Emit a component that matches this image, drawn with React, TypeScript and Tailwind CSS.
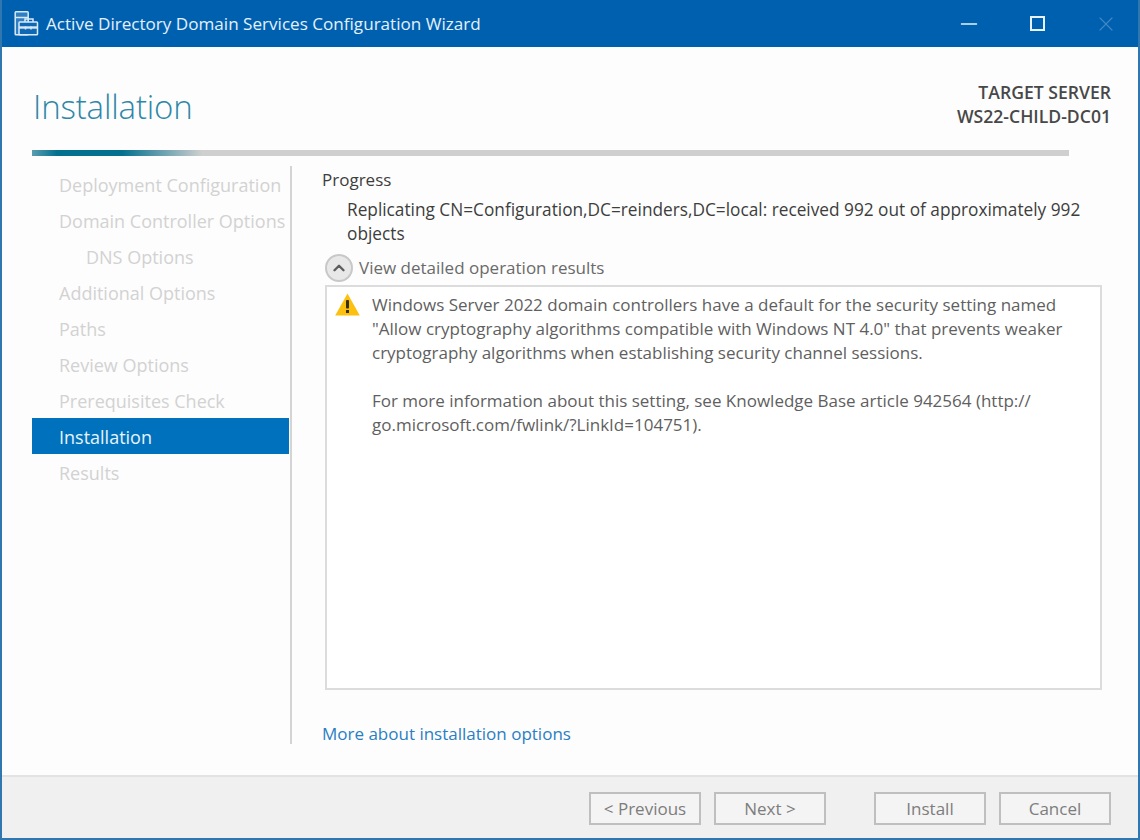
import React from 'react';
import { Minus, X, ChevronUp } from 'lucide-react';

const steps = [
  { label: 'Deployment Configuration' },
  { label: 'Domain Controller Options' },
  { label: 'DNS Options', indent: true },
  { label: 'Additional Options' },
  { label: 'Paths' },
  { label: 'Review Options' },
  { label: 'Prerequisites Check' },
  { label: 'Installation', active: true },
  { label: 'Results' },
];

function AppIcon() {
  return (
    <svg width="25" height="25" viewBox="0 0 25 25" fill="none" stroke="#d9e9f6" strokeWidth="1.5">
      <rect x="1.2" y="0.8" width="13" height="23" rx="0.8" fill="#2f7fc2" />
      <path d="M1.2 6.5h13" />
      <path d="M11 11V8h8v3" />
      <rect x="5" y="11" width="18.5" height="12.8" rx="0.8" fill="#0e68b4" />
      <path d="M5 16.5h18.5" strokeWidth="2.4" />
      <path d="M11.5 15.5v3M17 15.5v3" />
    </svg>
  );
}

function WarningIcon() {
  return (
    <svg width="25" height="23" viewBox="0 0 25 23">
      <path d="M12.5 0.5 24.8 22.5H0.2Z" fill="#fcc10f" />
      <rect x="11" y="7" width="3" height="8.5" rx="0.8" fill="#38300f" />
      <rect x="11" y="17" width="3" height="3" fill="#38300f" />
    </svg>
  );
}

function WizardButton({ label, className = '' }: { label: string; className?: string }) {
  return (
    <div className={`flex h-[33px] w-[112px] items-center justify-center border-2 border-[#bfbfbf] bg-[#f4f4f4] text-[#7d7d7d] ${className}`}>
      {label}
    </div>
  );
}

export default function App() {
  return (
    <div className="flex h-[840px] w-[1140px] flex-col overflow-hidden border-x-2 border-b-2 border-[#2f77ae] bg-[#fdfdfd] font-['Open_Sans','Noto_Sans',sans-serif] text-[17px] leading-[24px]">
      <div className="flex h-[47px] shrink-0 items-center bg-[#0060b0] pl-[12px] text-[#e4f0fa]">
        <AppIcon />
        <span className="ml-[7px] text-[17.1px]">Active Directory Domain Services Configuration Wizard</span>
        <div className="ml-auto flex items-center text-[#e8f2fa]">
          <Minus size={26} strokeWidth={1.2} className="mr-[48px]" />
          <div className="mr-[49px] h-[15px] w-[15px] border-2 border-[#e8f2fa]"></div>
          <X size={24} strokeWidth={1.2} className="mr-[20px] text-[#3f86c2]" />
        </div>
      </div>

      <div className="flex h-[103px] shrink-0 justify-between pl-[31px] pr-[27px]">
        <h1 className="mt-[37px] text-[33px] font-light leading-[46px] tracking-[-0.15px] text-[#2d87a8]">Installation</h1>
        <div className="mt-[33px] text-right text-[17.6px] font-semibold leading-[24px] text-[#484848]">
          <div>TARGET SERVER</div>
          <div>WS22-CHILD-DC01</div>
        </div>
      </div>

      <div className="ml-[30px] h-[6px] w-[1037px] shrink-0 bg-[linear-gradient(to_right,#5a9db0_0,#03708f_25px,#03708f_90px,#cfcfcf_170px)]"></div>

      <div className="mt-[10px] flex min-h-0 flex-1 pl-[30px]">
        <nav className="w-[257px] shrink-0">
          <ul className="flex flex-col text-[18px]">
            {steps.map((s) => (
              <li
                key={s.label}
                className={
                  s.active
                    ? 'flex h-[36px] items-center bg-[#0072bd] pl-[27px] pt-[2px] text-[#e8f3fb]'
                    : `flex h-[36px] items-center whitespace-nowrap pt-[2px] text-[#d2d2d2] ${s.indent ? 'pl-[54px]' : 'pl-[27px]'}`
                }
              >
                {s.label}
              </li>
            ))}
          </ul>
        </nav>

        <div className="ml-[1px] h-[578px] w-[2px] shrink-0 bg-[#d4d4d4]"></div>

        <main className="flex w-[810px] flex-col pl-[30px]">
          <div className="mt-[2px] text-[#3e3e3e]">Progress</div>
          <p className="mt-[6px] w-[775px] pl-[25px] text-[17.25px] text-[#3e3e3e]">
            Replicating CN=Configuration,DC=reinders,DC=local: received 992 out of approximately 992 objects
          </p>
          <div className="mt-[7px] flex h-[30px] items-center pl-[3px] text-[#6a6a6a]">
            <div className="flex h-[28px] w-[28px] items-center justify-center rounded-full border-2 border-[#c8c8c8] bg-[#e8e8e8]">
              <ChevronUp size={18} strokeWidth={3.2} className="text-[#5e5e5e]" />
            </div>
            <span className="ml-[6px]">View detailed operation results</span>
          </div>
          <div className="ml-[3px] mt-[2px] flex h-[405px] w-[777px] border-2 border-[#dcdcdc] bg-white pl-[8px] pt-[6px] text-[#5f5f5f]">
            <div className="shrink-0">
              <WarningIcon />
            </div>
            <div className="ml-[12px] w-[725px]">
              <p>
                Windows Server 2022 domain controllers have a default for the security setting named
                <br />
                "Allow cryptography algorithms compatible with Windows NT 4.0" that prevents weaker
                <br />
                cryptography algorithms when establishing security channel sessions.
              </p>
              <p className="mt-[24px]">
                For more information about this setting, see Knowledge Base article 942564 (http://
                <br />
                go.microsoft.com/fwlink/?LinkId=104751).
              </p>
            </div>
          </div>
          <a className="mt-[32px] text-[#2a7ec4]">More about installation options</a>
        </main>
      </div>

      <div className="flex h-[63px] shrink-0 items-start justify-end border-t-2 border-[#e3e3e3] bg-[#f0f0f0] pr-[27px] pt-[15px]">
        <WizardButton label="< Previous" />
        <WizardButton label="Next >" className="ml-[13px]" />
        <WizardButton label="Install" className="ml-[48px]" />
        <WizardButton label="Cancel" className="ml-[13px]" />
      </div>
    </div>
  );
}
